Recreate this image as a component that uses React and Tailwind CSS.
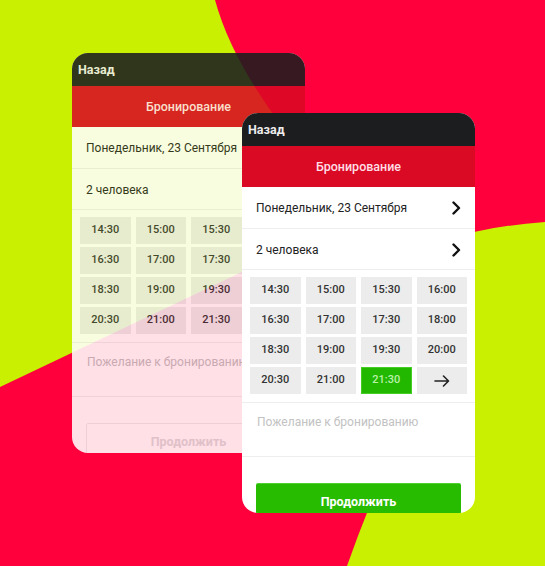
import React from "react";

const times = [
  "14:30", "15:00", "15:30", "16:00",
  "16:30", "17:00", "17:30", "18:00",
  "18:30", "19:00", "19:30", "20:00",
  "20:30", "21:00", "21:30", "next",
];

function Chevron() {
  return (
    <svg width="9" height="14" viewBox="0 0 9 14" fill="none">
      <path d="M1.5 1.5 L7 7 L1.5 12.5" stroke="#111" strokeWidth="2.4" strokeLinecap="round" strokeLinejoin="round" />
    </svg>
  );
}

function Arrow() {
  return (
    <svg width="16" height="12" viewBox="0 0 16 12" fill="none">
      <path d="M1 6 H14.5 M9.5 1 L14.5 6 L9.5 11" stroke="#222" strokeWidth="1.6" strokeLinecap="round" strokeLinejoin="round" />
    </svg>
  );
}

function Card({ active }) {
  return (
    <div className="w-[233px] h-[400px] rounded-[16px] overflow-hidden bg-white flex flex-col" style={{ fontFamily: "Roboto, 'Noto Sans', sans-serif" }}>
      <div className="h-[33px] shrink-0 bg-[#1c1d1f] px-[6px] pt-[1px] flex items-center text-[12.5px] font-bold text-[#ececec]">
        Назад
      </div>
      <div className="h-[41px] shrink-0 bg-[#da0a24] pt-[1px] flex items-center justify-center text-[12.5px] font-medium text-[#ffdfe4]">
        Бронирование
      </div>
      <div className="h-[42px] shrink-0 px-[14px] pt-[1px] flex items-center justify-between border-b border-[#eeeeee] text-[12px] text-[#222]">
        <span>Понедельник, 23 Сентября</span>
        <Chevron />
      </div>
      <div className="h-[41px] shrink-0 px-[14px] pt-[1px] flex items-center justify-between border-b border-[#eeeeee] text-[12px] text-[#222]">
        <span>2 человека</span>
        <Chevron />
      </div>
      <div className="shrink-0 px-2 pt-[7px] pb-[8px] grid grid-cols-4 gap-x-[5px] gap-y-[3px] border-b border-[#eeeeee]">
        {times.map((t) => {
          const sel = active && t === "21:30";
          return (
            <div
              key={t}
              className={
                sel
                  ? "h-[27px] flex items-center justify-center bg-[#22b800] border border-[#45cc25] text-[11px] font-medium text-[#b9f1aa]"
                  : "h-[27px] flex items-center justify-center bg-[#ececec] text-[11px] font-medium text-[#333333]"
              }
            >
              {t === "next" ? <Arrow /> : t}
            </div>
          );
        })}
      </div>
      <div className="h-[54px] shrink-0 px-[15px] pt-[10px] border-b border-[#eeeeee] text-[12px] text-[#c2c2c2] whitespace-nowrap overflow-hidden">
        Пожелание к бронированию
      </div>
      <div className="px-[14px] pt-[26px] shrink-0">
        {active ? (
          <div className="h-[38px] bg-[#27bc00] border-t border-[#4fd02e] rounded-[2px] flex items-center justify-center text-[12.5px] font-bold text-white">
            Продолжить
          </div>
        ) : (
          <div className="h-[38px] border border-[#ececec] rounded-[2px] flex items-center justify-center text-[12.5px] font-bold text-[#dcdcdc]">
            Продолжить
          </div>
        )}
      </div>
    </div>
  );
}

export default function App() {
  return (
    <div className="relative w-[545px] h-[566px] overflow-hidden bg-[#c9f000]">
      <svg className="absolute inset-0" width="545" height="566" viewBox="0 0 545 566">
        <path
          d="M215 0 L545 0 L545 222 Q505 225 474 232 L385 470 Q365 515 347 566 L0 566 L0 387 L330 230 L285 130 C250 85 226 40 215 0 Z"
          fill="#ff003c"
        />
      </svg>
      <div className="absolute left-[72px] top-[53px] opacity-[0.88]">
        <Card active={false} />
      </div>
      <div className="absolute left-[242px] top-[113px]">
        <Card active={true} />
      </div>
    </div>
  );
}
